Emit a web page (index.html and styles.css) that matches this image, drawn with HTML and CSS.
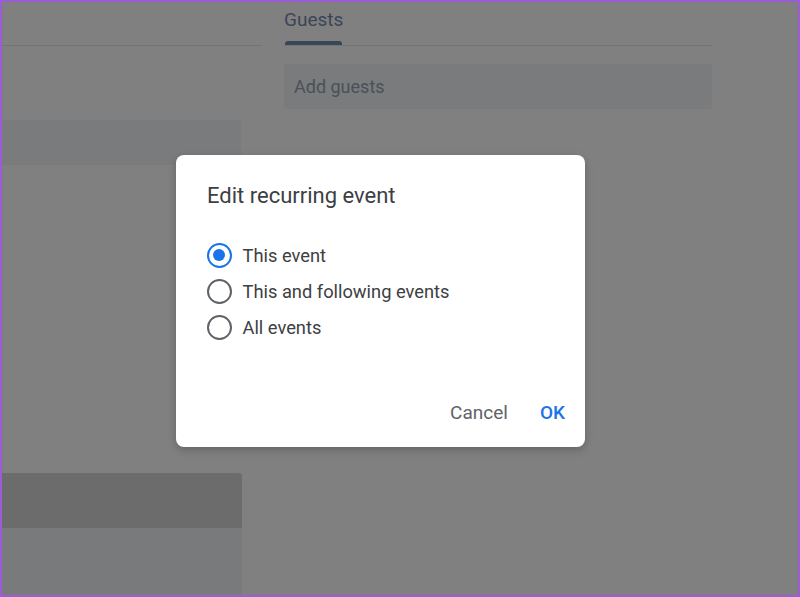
FILE: index.html
```html
<!DOCTYPE html>
<html lang="en">
<head>
<meta charset="utf-8">
<title>Edit recurring event</title>
<link rel="stylesheet" href="styles.css">
</head>
<body>
<div class="page">
  <div class="col-left">
    <div class="tabbar"></div>
    <div class="field field-top"></div>
    <div class="panel-head"></div>
    <div class="panel-body"></div>
  </div>
  <div class="col-right">
    <div class="tabbar">
      <div class="tab">Guests</div>
    </div>
    <div class="field guests-input">Add guests</div>
  </div>
</div>

<div class="dialog" role="dialog" aria-labelledby="dlg-title">
  <h2 class="dialog-title" id="dlg-title">Edit recurring event</h2>
  <div class="options">
    <label class="option"><span class="radio radio-on"></span><span class="option-text">This event</span></label>
    <label class="option"><span class="radio"></span><span class="option-text">This and following events</span></label>
    <label class="option"><span class="radio"></span><span class="option-text">All events</span></label>
  </div>
  <div class="actions">
    <button class="btn btn-cancel">Cancel</button>
    <button class="btn btn-ok">OK</button>
  </div>
</div>

<div class="frame"></div>
</body>
</html>
```

FILE: styles.css
```css
html, body {
  margin: 0;
  padding: 0;
}

body {
  width: 800px;
  height: 597px;
  overflow: hidden;
  background: #808080;
  font-family: Roboto, "Liberation Sans", Arial, sans-serif;
  position: relative;
}

.page {
  display: grid;
  grid-template-columns: 262px 428px;
  column-gap: 22px;
  height: 597px;
}

.col-left,
.col-right {
  display: flex;
  flex-direction: column;
}

.tabbar {
  height: 46px;
  box-sizing: border-box;
  border-bottom: 1px solid #737373;
  display: flex;
  align-items: flex-end;
}

.tab {
  font-size: 19px;
  color: #3c4556;
  line-height: 22px;
  display: flex;
  flex-direction: column;
  gap: 10px;
}

.tab::after {
  content: "";
  display: block;
  width: 57px;
  height: 4px;
  margin-left: 1px;
  background: #394558;
  border-radius: 3px 3px 0 0;
}

.field {
  background: #7a7b7c;
}

.field-top {
  width: 241px;
  height: 45px;
  margin-top: 74px;
}

.guests-input {
  margin-top: 18px;
  height: 45px;
  box-sizing: border-box;
  padding: 0 10px;
  display: flex;
  align-items: center;
  font-size: 18px;
  color: #4a5058;
  border-radius: 2px;
}

.panel-head {
  width: 242px;
  height: 55px;
  margin-top: 308px;
  background: #6b6c6b;
  border-top-right-radius: 3px;
}

.panel-body {
  width: 242px;
  flex: 1;
  background: #797a7b;
}

.dialog {
  position: absolute;
  left: 176px;
  top: 155px;
  width: 409px;
  height: 292px;
  box-sizing: border-box;
  padding: 27px 12px 17px 31px;
  background: #ffffff;
  border-radius: 8px;
  box-shadow: 0 3px 8px rgba(0, 0, 0, 0.22);
  display: flex;
  flex-direction: column;
}

.dialog-title {
  margin: 0;
  font-size: 22px;
  font-weight: 400;
  line-height: 28px;
  color: #3c4043;
}

.options {
  margin-top: 27px;
  display: flex;
  flex-direction: column;
}

.option {
  height: 36px;
  display: flex;
  align-items: center;
  gap: 11px;
}

.radio {
  width: 25px;
  height: 25px;
  box-sizing: border-box;
  border: 2.5px solid #5f6368;
  border-radius: 50%;
  display: flex;
  align-items: center;
  justify-content: center;
  margin-left: -0.5px;
}

.radio-on {
  border-color: #1a73e8;
}

.radio-on::after {
  content: "";
  width: 12px;
  height: 12px;
  border-radius: 50%;
  background: #1a73e8;
}

.option-text {
  font-size: 18.3px;
  color: #3c4043;
}

.actions {
  margin-top: auto;
  display: flex;
  justify-content: flex-end;
  gap: 16px;
  height: 36px;
}

.btn {
  border: none;
  background: transparent;
  font-family: inherit;
  font-size: 19px;
  font-weight: 400;
  padding: 0 8px;
  height: 36px;
  cursor: pointer;
}

.btn-cancel {
  color: #5f6368;
}

.btn-ok {
  color: #1a73e8;
  font-weight: 500;
}

.frame {
  position: absolute;
  inset: 0;
  border: 2px solid #9b5cd6;
  pointer-events: none;
}
```
